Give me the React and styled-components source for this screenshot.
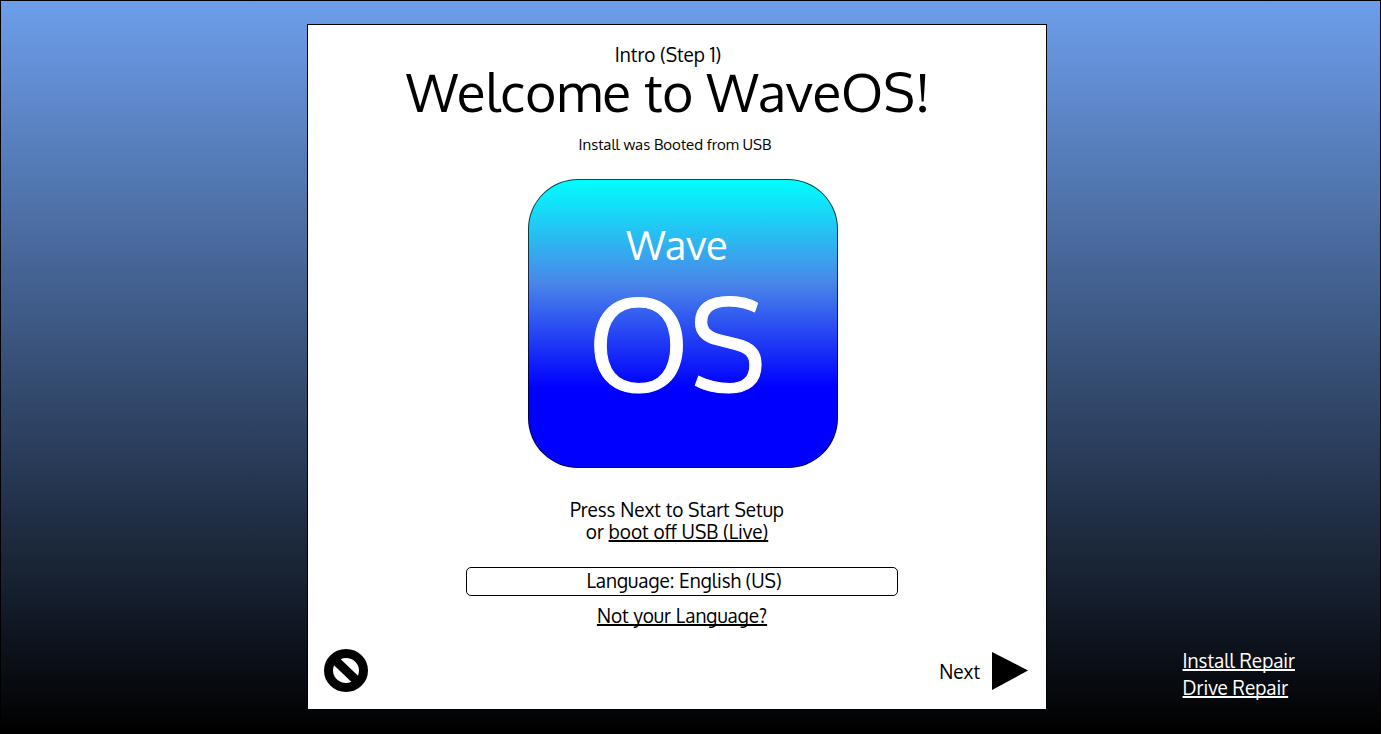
import React from "react";
import styled, { createGlobalStyle } from "styled-components";

const GlobalStyle = createGlobalStyle`
  * { box-sizing: border-box; }
  body {
    margin: 0;
    font-family: Oxygen, "Open Sans", "Noto Sans", sans-serif;
    font-size: 19px;
    line-height: 22px;
    color: #000;
  }
`;

const Desktop = styled.div`
  min-height: 100vh;
  display: grid;
  grid-template-columns: 306fr 740fr 333fr;
  padding: 23px 0;
  border: 1px solid #000;
  background: linear-gradient(#6d9eeb, #000);
`;

const Installer = styled.main`
  grid-column: 2;
  display: flex;
  flex-direction: column;
  align-items: center;
  padding: 18px 16px 16px;
  border: 1px solid #000;
  background: #fff;
`;

const Header = styled.header`
  display: flex;
  flex-direction: column;
  align-items: center;
  padding-right: 18px;
`;

const Step = styled.p`
  margin: 0;
`;

const Title = styled.h1`
  margin: 0;
  font-size: 53px;
  font-weight: 400;
  line-height: 52px;
  white-space: nowrap;
`;

const BootSource = styled.p`
  margin: 18px 0 0;
  padding-right: 4px;
  font-size: 15px;
  line-height: 20px;
`;

const Logo = styled.div`
  width: 310px;
  height: 289px;
  margin: 24px 0 0 12px;
  padding: 38px 12px 0 0;
  display: flex;
  flex-direction: column;
  align-items: center;
  border: 1px solid rgba(0, 0, 0, 0.7);
  border-radius: 50px;
  background: linear-gradient(#0ff, #4a86e8 36%, #00f 72%) border-box;
  color: #fff;
`;

const LogoText = styled.span`
  font-size: ${(p) => (p.$large ? "128px" : "40px")};
  line-height: ${(p) => (p.$large ? "144px" : "52px")};
  -webkit-text-stroke: ${(p) => (p.$large ? "1px #fff" : "0")};
`;

const Prompt = styled.p`
  margin: 30px 0 0;
  text-align: center;
`;

const TextLink = styled.a`
  color: inherit;
  text-decoration: underline;
  text-decoration-thickness: 2px;
  text-underline-offset: 1px;
  text-decoration-skip-ink: none;
`;

const Language = styled.form`
  display: flex;
  flex-direction: column;
  align-items: center;
  gap: 8px;
  width: 442px;
  margin-top: 25px;
  padding-left: 10px;
`;

const LanguageSelect = styled.select`
  appearance: none;
  width: 100%;
  height: 29px;
  padding: 0 0 2px 4px;
  border: 1px solid #000;
  border-radius: 5px;
  background: #fff;
  color: inherit;
  font: inherit;
  line-height: 25px;
  text-align: center;
  text-align-last: center;
`;

const Footer = styled.footer`
  align-self: stretch;
  display: flex;
  align-items: center;
  justify-content: space-between;
  margin-top: auto;
`;

const IconButton = styled.button`
  display: flex;
  align-items: center;
  gap: 12px;
  padding: 0;
  border: 0;
  background: none;
  color: inherit;
  font: inherit;
  cursor: pointer;
`;

const RepairLinks = styled.nav`
  align-self: end;
  justify-self: end;
  display: flex;
  flex-direction: column;
  align-items: flex-start;
  gap: 5px;
  margin: 0 85px 12px 0;
  color: #fff;
`;

function CancelIcon() {
  return (
    <svg width="44" height="44" viewBox="0 0 44 44" aria-hidden="true">
      <ellipse cx="22" cy="21.5" rx="17.5" ry="17" fill="none" stroke="#000" strokeWidth="9" />
      <path d="M10 10L34 33" stroke="#000" strokeWidth="9" />
    </svg>
  );
}

function NextIcon() {
  return (
    <svg width="38" height="38" viewBox="0 0 38 38" aria-hidden="true">
      <path d="M0 0L36 18.5L0 38Z" />
    </svg>
  );
}

export default function App() {
  return (
    <>
      <GlobalStyle />
      <Desktop>
        <Installer>
          <Header>
            <Step>Intro (Step 1)</Step>
            <Title>Welcome to WaveOS!</Title>
          </Header>
          <BootSource>Install was Booted from USB</BootSource>
          <Logo>
            <LogoText>Wave</LogoText>
            <LogoText $large>OS</LogoText>
          </Logo>
          <Prompt>
            Press Next to Start Setup
            <br />
            or <TextLink href="#live">boot off USB (Live)</TextLink>
          </Prompt>
          <Language>
            <LanguageSelect aria-label="Language" defaultValue="en-US">
              <option value="en-US">Language: English (US)</option>
            </LanguageSelect>
            <TextLink href="#languages">Not your Language?</TextLink>
          </Language>
          <Footer>
            <IconButton type="button" aria-label="Cancel">
              <CancelIcon />
            </IconButton>
            <IconButton type="button">
              Next
              <NextIcon />
            </IconButton>
          </Footer>
        </Installer>
        <RepairLinks>
          <TextLink href="#install-repair">Install Repair</TextLink>
          <TextLink href="#drive-repair">Drive Repair</TextLink>
        </RepairLinks>
      </Desktop>
    </>
  );
}
